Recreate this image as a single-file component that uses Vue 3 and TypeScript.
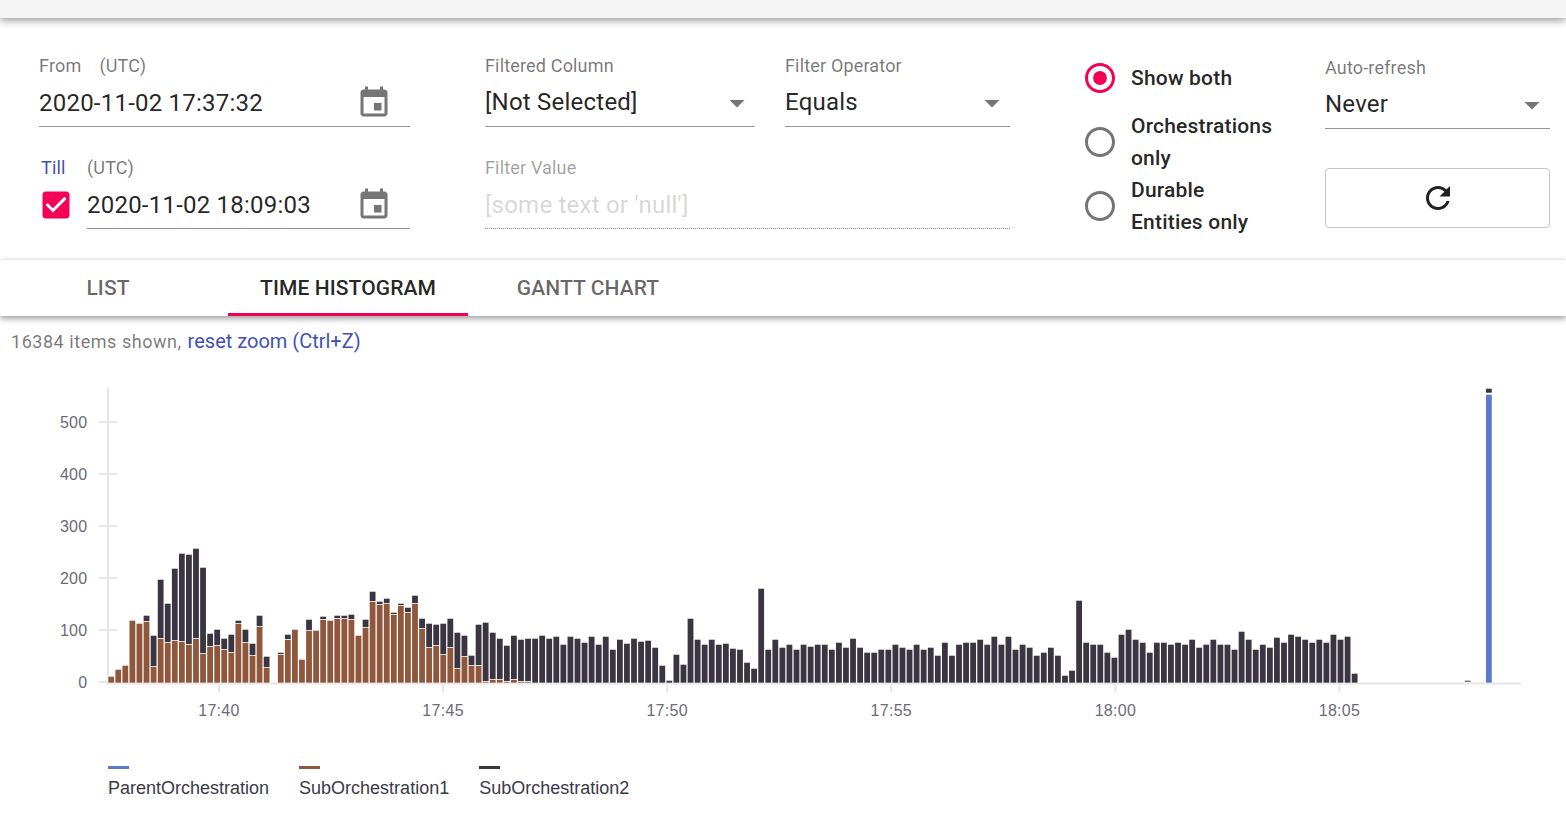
<template>
  <div class="page">
    <div class="top-strip"></div>

    <section class="filters">
      <div class="dates">
        <div class="field">
          <div class="label">From<span class="utc-from">(UTC)</span></div>
          <div class="control nudged">
            <span class="value">2020-11-02 17:37:32</span>
            <svg class="icon" viewBox="0 0 24 24"><path :d="eventIcon" /></svg>
          </div>
        </div>
        <div class="till-row">
          <div class="till-check">
            <div class="label till-label">Till</div>
            <svg class="icon check" viewBox="0 0 24 24"><path :d="checkIcon" /></svg>
          </div>
          <div class="field grow">
            <div class="label">(UTC)</div>
            <div class="control nudged">
              <span class="value">2020-11-02 18:09:03</span>
              <svg class="icon" viewBox="0 0 24 24"><path :d="eventIcon" /></svg>
            </div>
          </div>
        </div>
      </div>

      <div class="column-filter">
        <div class="select-row">
          <div class="field column-field">
            <div class="label">Filtered Column</div>
            <div class="control">
              <span class="value">[Not Selected]</span>
              <svg class="icon arrow" viewBox="0 0 24 24"><path d="M7 10l5 5 5-5z" /></svg>
            </div>
          </div>
          <div class="field operator-field">
            <div class="label">Filter Operator</div>
            <div class="control">
              <span class="value">Equals</span>
              <svg class="icon arrow" viewBox="0 0 24 24"><path d="M7 10l5 5 5-5z" /></svg>
            </div>
          </div>
        </div>
        <div class="field disabled">
          <div class="label">Filter Value</div>
          <div class="control nudged">
            <span class="value">[some text or 'null']</span>
          </div>
        </div>
      </div>

      <div class="radios">
        <div v-for="item in radioItems" :key="item.label" class="radio-row">
          <svg class="icon radio" :class="{ on: item.on }" viewBox="0 0 24 24">
            <path d="M12 2C6.48 2 2 6.48 2 12s4.48 10 10 10 10-4.48 10-10S17.52 2 12 2zm0 18c-4.42 0-8-3.58-8-8s3.58-8 8-8 8 3.58 8 8-3.58 8-8 8z" />
            <circle v-if="item.on" cx="12" cy="12" r="4.6" />
          </svg>
          <span class="radio-label">{{ item.label }}</span>
        </div>
      </div>

      <div class="refresh">
        <div class="field">
          <div class="label">Auto-refresh</div>
          <div class="control">
            <span class="value">Never</span>
            <svg class="icon arrow" viewBox="0 0 24 24"><path d="M7 10l5 5 5-5z" /></svg>
          </div>
        </div>
        <button class="refresh-btn">
          <svg class="icon refresh-icon" viewBox="0 0 24 24">
            <path d="M17.65 6.35C16.2 4.9 14.21 4 12 4c-4.42 0-7.99 3.58-7.99 8s3.57 8 7.99 8c3.73 0 6.84-2.55 7.73-6h-2.08c-.82 2.33-3.04 4-5.65 4-3.31 0-6-2.69-6-6s2.69-6 6-6c1.66 0 3.14.69 4.22 1.78L13 11h7V4l-2.35 2.35z" />
          </svg>
        </button>
      </div>
    </section>

    <nav class="tabs">
      <div v-for="tab in tabs" :key="tab" class="tab" :class="{ active: tab === activeTab }">{{ tab }}</div>
    </nav>

    <div class="summary">16384 items shown, <a class="reset">reset zoom (Ctrl+Z)</a></div>

    <svg class="chart" width="1566" height="380">
      <rect class="axis" x="107" y="28" width="2" height="295" />
      <rect class="axis" x="107" y="322.5" width="1414" height="2" />
      <g v-for="tick in yTicks" :key="tick.label">
        <rect class="axis" x="99" :y="tick.y - 1" width="18" height="2" />
        <text class="tick" x="87.5" :y="tick.y + 6" text-anchor="end">{{ tick.label }}</text>
      </g>
      <g v-for="tick in xTicks" :key="tick.label">
        <rect class="axis" :x="tick.x - 1" y="323" width="2" height="9" />
        <text class="tick" :x="tick.x" y="356" text-anchor="middle">{{ tick.label }}</text>
      </g>
      <rect
        v-for="(b, i) in bars"
        :key="i"
        class="bar"
        :x="b.x"
        :y="b.y"
        :width="barWidth"
        :height="b.h"
        :fill="b.color"
      />
    </svg>

    <div class="legend">
      <div v-for="item in legend" :key="item.name" class="legend-item">
        <span class="swatch" :style="{ background: item.color }"></span>
        <span>{{ item.name }}</span>
      </div>
    </div>
  </div>
</template>

<script setup lang="ts">
import { computed } from 'vue'

const eventIcon =
  'M17 12h-5v5h5v-5zM16 1v2H8V1H6v2H5c-1.11 0-1.99.9-1.99 2L3 19c0 1.1.89 2 2 2h14c1.1 0 2-.9 2-2V5c0-1.1-.9-2-2-2h-1V1h-2zm3 18H5V8h14v11z'
const checkIcon =
  'M19 3H5c-1.11 0-2 .9-2 2v14c0 1.1.89 2 2 2h14c1.11 0 2-.9 2-2V5c0-1.1-.89-2-2-2zm-9 14l-5-5 1.41-1.41L10 14.17l7.59-7.59L19 8l-9 9z'

const radioItems = [
  { label: 'Show both', on: true },
  { label: 'Orchestrations only', on: false },
  { label: 'Durable Entities only', on: false }
]

const tabs = ['LIST', 'TIME HISTOGRAM', 'GANTT CHART']
const activeTab = 'TIME HISTOGRAM'

const BLUE = '#5b7bca'
const BROWN = '#8f573c'
const DARK = '#3a3541'

const legend = [
  { name: 'ParentOrchestration', color: BLUE },
  { name: 'SubOrchestration1', color: BROWN },
  { name: 'SubOrchestration2', color: DARK }
]

const baseline = 322.7
const originX = 108.3
const step = 7.065
const barWidth = 5.8

const yTicks = [0, 100, 200, 300, 400, 500].map((v) => ({ label: String(v), y: 322 - v * 0.52 }))
const xTicks = ['17:40', '17:45', '17:50', '17:55', '18:00', '18:05'].map((label, i) => ({
  label,
  x: 219 + i * 224.1
}))

// bar heights in px, per bucket
const brown = [
  6, 13, 17, 62, 59, 61, 16, 44, 40, 42, 41, 38, 44, 29, 36, 37, 33, 30, 59, 40, 27, 56, 15, 0, 28, 43, 53, 23, 52, 52,
  63, 62, 64, 64, 63, 47, 55, 81, 78, 79, 68, 77, 70, 79, 54, 35, 37, 28, 35, 14, 26, 17, 17, 1, 3, 3, 1, 3, 1, 1
]
const totals = [
  6, 13, 17, 62, 59, 67, 47, 103, 79, 114, 129, 128, 134, 115, 49, 53, 44, 48, 62, 53, 39, 67, 26, 0, 30, 48, 53, 23, 63,
  52, 66, 62, 67, 67, 68, 47, 63, 91, 81, 84, 70, 79, 75, 87, 64, 59, 58, 59, 64, 50, 47, 27, 58, 60, 50, 44, 37, 47, 43,
  44, 44, 47, 44, 46, 38, 46, 44, 40, 46, 38, 46, 33, 43, 39, 44, 41, 42, 35, 17, 2, 28, 18, 64, 43, 38, 43, 38, 39, 34,
  33, 20, 14, 94, 33, 43, 35, 38, 33, 38, 36, 38, 38, 33, 40, 35, 44, 35, 30, 30, 33, 33, 38, 35, 33, 38, 33, 35, 27, 40,
  27, 38, 40, 40, 43, 38, 46, 38, 46, 33, 38, 35, 27, 30, 35, 27, 7, 12, 82, 40, 38, 38, 30, 25, 48, 53, 43, 40, 30, 40,
  40, 38, 40, 38, 43, 35, 38, 43, 38, 38, 33, 51, 43, 33, 38, 35, 45, 40, 48, 46, 43, 40, 43, 40, 48, 43, 46, 9
]

const bars = computed(() => {
  const out: { x: number; y: number; h: number; color: string }[] = []
  totals.forEach((total, i) => {
    const x = originX + i * step
    const b = brown[i] ?? 0
    if (b > 0) out.push({ x, y: baseline - b, h: b, color: BROWN })
    if (total > b) out.push({ x, y: baseline - total, h: total - b - (b > 0 ? 0.6 : 0), color: DARK })
  })
  // the two late buckets
  const late = originX + 192 * step
  out.push({ x: late, y: baseline - 2, h: 1, color: DARK })
  const last = originX + 195 * step
  out.push({ x: last, y: baseline - 288, h: 288, color: BLUE })
  out.push({ x: last, y: baseline - 294, h: 4, color: DARK })
  return out
})
</script>

<style scoped>
.page {
  font-family: Roboto, "Noto Sans", sans-serif;
  color: rgba(0, 0, 0, 0.87);
  background: #fff;
  width: 1566px;
  height: 834px;
  overflow: hidden;
}

.top-strip {
  height: 18px;
  background: #f5f5f5;
  box-shadow: 0 2px 8px rgba(0, 0, 0, 0.45);
  position: relative;
}

.filters {
  display: flex;
  height: 242px;
  padding: 36px 16px 0 39px;
  box-sizing: border-box;
}

.dates {
  width: 371px;
  display: flex;
  flex-direction: column;
  gap: 29px;
  margin-right: 75px;
}

.column-filter {
  width: 525px;
  display: flex;
  flex-direction: column;
  gap: 29px;
  margin-right: 75px;
}

.select-row {
  display: flex;
  gap: 30px;
}

.column-field {
  width: 270px;
}

.operator-field {
  width: 225px;
}

.field {
  height: 73px;
}

.grow {
  flex: 1;
}

.label {
  height: 24px;
  line-height: 24px;
  font-size: 18px;
  letter-spacing: 0.00938em;
  color: rgba(0, 0, 0, 0.54);
}

.utc-from {
  margin-left: 18px;
}

.control {
  height: 49px;
  box-sizing: border-box;
  display: flex;
  align-items: center;
  justify-content: space-between;
  border-bottom: 1px solid #949494;
}

.control.nudged {
  padding-top: 2px;
}

.value {
  font-size: 24px;
  line-height: 46px;
  letter-spacing: 0.00938em;
}

.icon {
  width: 36px;
  height: 36px;
  flex: none;
  fill: #757575;
}

.control .icon {
  margin-right: 18px;
}

.control .arrow {
  margin-right: 0;
  margin-top: 2px;
}

.till-row {
  display: flex;
}

.till-check {
  width: 48px;
}

.till-label {
  padding-left: 2px;
  color: #3f51b5;
}

.check {
  display: block;
  fill: #f50057;
  margin: 7px 0 0 -1px;
}

.disabled .label {
  color: rgba(0, 0, 0, 0.38);
}

.disabled .value {
  color: rgba(0, 0, 0, 0.18);
}

.disabled .control {
  border-bottom: 1px dotted #8a8a8a;
}

.radios {
  width: 240px;
  margin-top: -8px;
}

.radio-row {
  height: 64px;
  display: flex;
  align-items: center;
  gap: 13px;
  margin-left: -3px;
}

.radio.on {
  fill: #f50057;
}

.radio-label {
  width: 148px;
  font-size: 21px;
  font-weight: 500;
  line-height: 32px;
  letter-spacing: 0.00938em;
}

.refresh {
  width: 225px;
  margin-top: 2px;
}

.refresh-btn {
  display: flex;
  align-items: center;
  justify-content: center;
  width: 225px;
  height: 60px;
  margin-top: 39px;
  padding: 0;
  background: #fff;
  border: 1px solid #c4c4c4;
  border-radius: 4px;
}

.refresh-icon {
  fill: rgba(0, 0, 0, 0.87);
}

.tabs {
  display: flex;
  height: 56px;
  background: #fff;
  position: relative;
  box-shadow: 0 3px 6px rgba(0, 0, 0, 0.35), 0 -1px 4px rgba(0, 0, 0, 0.08);
}

.tab {
  width: 240px;
  box-sizing: border-box;
  height: 56px;
  line-height: 56px;
  text-align: center;
  font-size: 21px;
  font-weight: 500;
  letter-spacing: 0.1px;
  color: rgba(0, 0, 0, 0.6);
}

.tab:first-child {
  width: 216px;
  margin-right: 12px;
}

.tab.active {
  color: rgba(0, 0, 0, 0.87);
  border-bottom: 3px solid #f50057;
}

.summary {
  height: 44px;
  line-height: 51px;
  padding-left: 11px;
  font-size: 18px;
  letter-spacing: 0.03em;
  color: rgba(0, 0, 0, 0.54);
}

.reset {
  color: #3f51b5;
  font-size: 20px;
  letter-spacing: 0;
  margin-left: 1px;
}

.chart {
  display: block;
}

.axis {
  fill: #e6e6e9;
}

.bar {
  stroke: #fff;
  stroke-width: 1;
  paint-order: stroke;
}

.tick {
  font-family: "Liberation Sans", Arial, sans-serif;
  font-size: 16px;
  letter-spacing: 0.3px;
  fill: #6b6b76;
}

.legend {
  display: flex;
  gap: 30px;
  padding-left: 108px;
  margin-top: 26px;
  font-family: "Liberation Sans", Arial, sans-serif;
  font-size: 18px;
  color: #3a3a48;
}

.legend-item {
  display: flex;
  flex-direction: column;
}

.swatch {
  width: 21px;
  height: 3px;
  margin-bottom: 9px;
}
</style>

<style>
html,
body {
  margin: 0;
  background: #fff;
}
</style>
